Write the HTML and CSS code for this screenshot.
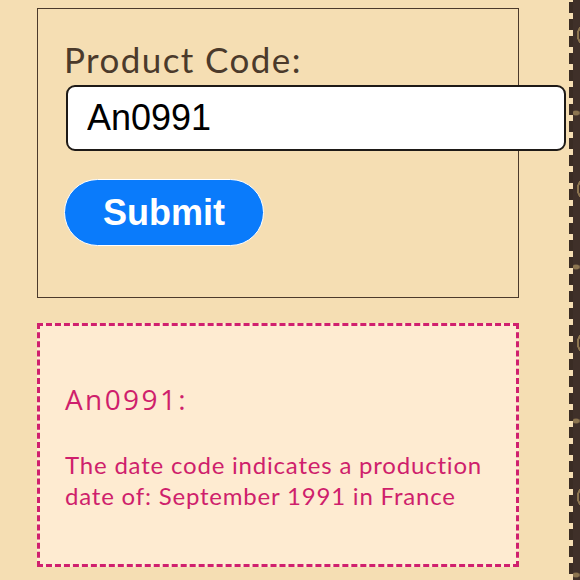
FILE: index.html
```html
<!DOCTYPE html>
<html lang="en">
<head>
<meta charset="utf-8">
<title>Date Code Lookup</title>
<link rel="stylesheet" href="styles.css">
</head>
<body>
  <main class="page">
    <form class="lookup">
      <label class="lookup-label" for="code">Product Code:</label>
      <input class="lookup-input" id="code" type="text" value="An0991">
      <button class="lookup-submit" type="button">Submit</button>
    </form>
    <section class="result">
      <h2 class="result-title">An0991:</h2>
      <p class="result-text">The date code indicates a production date of: September 1991 in France</p>
    </section>
  </main>
</body>
</html>
```
FILE: styles.css
```css
html, body {
  margin: 0;
  height: 100%;
}

/* monogram canvas behind the page: rings and small flowers in muted gold */
body {
  background-color: #3f3029;
  background-image:
    radial-gradient(circle at 20px 77px, transparent 11px, #8c7550 11.5px, #8c7550 13px, transparent 13.5px),
    radial-gradient(ellipse 5px 3px at 8px 0, #8c7550 60%, transparent 100%),
    radial-gradient(ellipse 5px 3px at 8px 154px, #8c7550 60%, transparent 100%);
  background-size: 40px 154px;
  background-position: 570px -42px, 568px 113px, 568px 113px;
  overflow: hidden;
}

/* wheat sheet with a stitched right edge */
.page {
  box-sizing: border-box;
  width: 573px;
  min-height: 100%;
  background-color: #f5deb3;
  background-image: linear-gradient(#3a2c24 0 11px, transparent 11px 17px);
  background-size: 4px 17px;
  background-position: right 0 top 2px;
  background-repeat: repeat-y;
  padding: 8px 0 0 37px;
  font-family: Lato, "Noto Sans", sans-serif;
}

.lookup {
  box-sizing: border-box;
  width: 482px;
  height: 290px;
  border: 1px solid #4b3a2b;
  padding: 28px 0 0 26px;
  display: flex;
  flex-direction: column;
  align-items: flex-start;
}

.lookup-label {
  font-size: 35px;
  line-height: 44px;
  letter-spacing: 1.4px;
  color: #4b3a2b;
}

.lookup-input {
  box-sizing: border-box;
  width: 500px;
  height: 66px;
  margin: 4px 0 0 2px;
  padding: 0 19px;
  border: 2px solid #1e1a17;
  border-radius: 9px;
  background: #fff;
  font-family: "Liberation Sans", Arial, sans-serif;
  font-size: 36px;
  color: #000;
}

.lookup-submit {
  box-sizing: border-box;
  width: 200px;
  height: 67px;
  margin-top: 28px;
  border: 1px solid #fff;
  border-radius: 34px;
  background: #0a7bfb;
  color: #fff;
  font-family: "Liberation Sans", Arial, sans-serif;
  font-weight: bold;
  font-size: 36px;
  padding: 0;
}

.result {
  box-sizing: border-box;
  width: 482px;
  height: 244px;
  margin-top: 25px;
  border: 3px dashed #d0206e;
  background: #feebd1;
  padding: 54px 0 0 25px;
  color: #cf1f6c;
}

.result-title {
  margin: 0;
  font-family: "Open Sans", sans-serif;
  font-weight: normal;
  font-size: 28px;
  line-height: 38px;
  letter-spacing: 2.4px;
}

.result-text {
  max-width: 440px;
  margin: 31px 0 0;
  font-size: 24px;
  line-height: 31px;
  letter-spacing: 0.8px;
}
```
